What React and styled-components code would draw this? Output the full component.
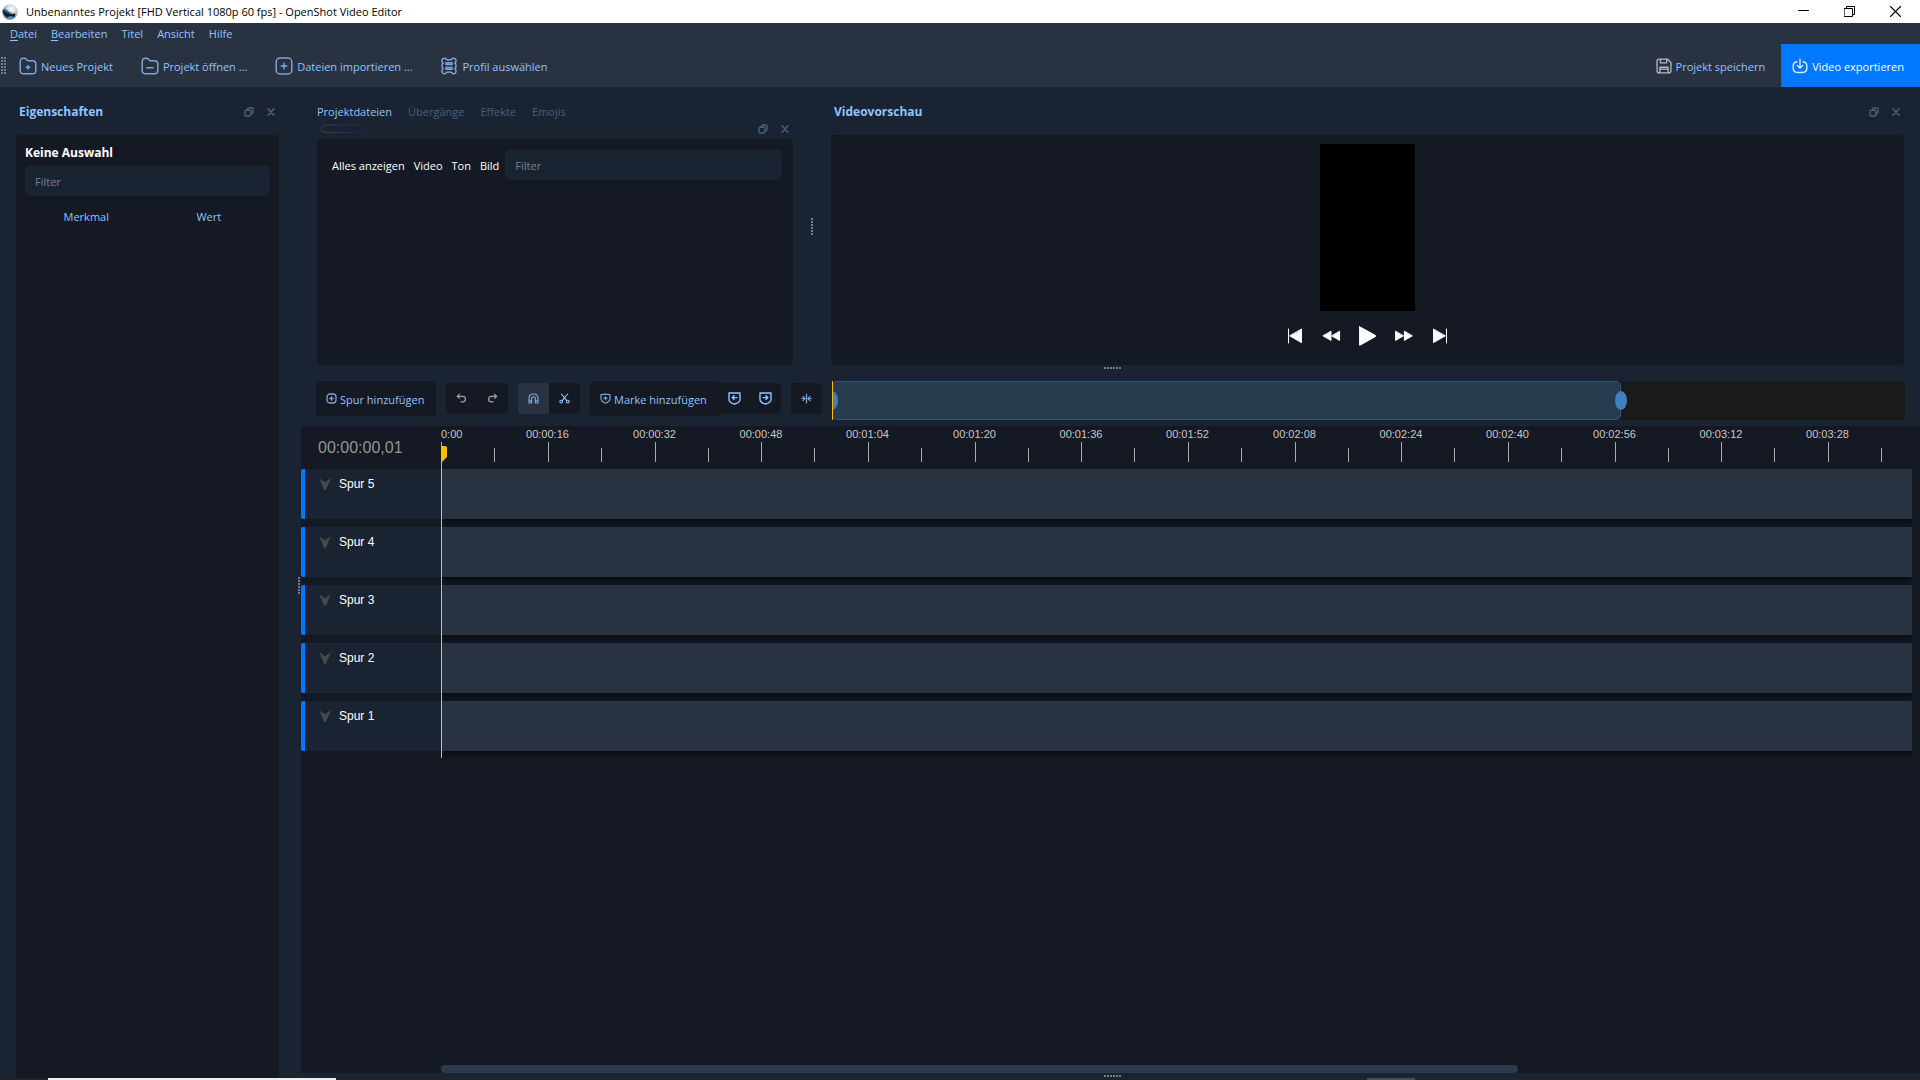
import React from "react";
import styled, { createGlobalStyle } from "styled-components";

const color = {
  base: "#192332",
  panel: "#141923",
  raised: "#283241",
  text: "#91c3ff",
  muted: "#456080",
  icon: "#7ba5dc",
  accent: "#0078ff",
  playhead: "#fabe0a",
};

const GlobalStyle = createGlobalStyle`
  * { box-sizing: border-box; }
  body {
    margin: 0;
    background: ${color.base};
    color: ${color.text};
    font: 11px/16px "Open Sans", "Noto Sans", sans-serif;
  }
  button, input { font: inherit; color: inherit; }
`;

/* ---------- shared parts ---------- */

const PlainButton = styled.button`
  display: flex;
  align-items: center;
  justify-content: center;
  border: 0;
  padding: 0;
  background: none;
  white-space: nowrap;
`;

const Panel = styled.div`
  display: flex;
  flex-direction: column;
  flex: 1;
  background: ${color.panel};
  border-radius: 4px;
`;

const FilterInput = styled.input`
  flex: ${(p) => (p.$grow ? 1 : "none")};
  min-width: 0;
  height: 30px;
  padding: 0 10px;
  border: 0;
  border-radius: 4px;
  background: ${color.base};
  color: #fff;
  outline: none;
  &::placeholder { color: #7c8188; opacity: 1; }
`;

const Svg = styled.svg`
  display: block;
  flex: none;
  fill: none;
  stroke: ${(p) => p.$stroke || color.icon};
  stroke-width: ${(p) => p.$weight || 1.5};
  stroke-linecap: round;
  stroke-linejoin: round;
`;

function Icon({ size = 18, box = size, stroke, weight, children }) {
  return (
    <Svg width={size} height={size} viewBox={`0 0 ${box} ${box}`} $stroke={stroke} $weight={weight} aria-hidden="true">
      {children}
    </Svg>
  );
}

function Grip({ cols, rows }) {
  const dots = [];
  for (let c = 0; c < cols; c++) for (let r = 0; r < rows; r++) dots.push([c * 3, r * 3]);
  return (
    <svg width={cols * 3 - 1} height={rows * 3 - 1} display="block" aria-hidden="true">
      {dots.map(([x, y]) => (
        <rect key={`${x}-${y}`} x={x} y={y} width="2" height="2" fill="#767d87" />
      ))}
    </svg>
  );
}

/* ---------- window chrome ---------- */

const Shell = styled.div`
  display: flex;
  flex-direction: column;
  min-height: 100vh;
`;

const TitleBar = styled.header`
  display: flex;
  align-items: center;
  height: 23px;
  padding: 0 2px;
  background: #fff;
  color: #000;
`;

const WindowTitle = styled.h1`
  flex: 1;
  margin: 0 0 0 8px;
  font-size: 11px;
  font-weight: 400;
`;

const WindowButton = styled(PlainButton)`
  width: 46px;
  height: 20px;
`;

const MenuBar = styled.nav`
  display: flex;
  height: 21px;
  padding: 0 3px;
  background: ${color.raised};
`;

const MenuButton = styled(PlainButton)`
  padding: 0 7px;
  u { text-underline-offset: 2px; }
`;

const ToolBar = styled.div`
  display: flex;
  align-items: center;
  gap: 13px;
  height: 43px;
  padding-left: 1px;
  background: ${color.raised};
`;

const ToolGroup = styled.div`
  display: flex;
  flex: 1;
  gap: 28px;
`;

const ToolButton = styled(PlainButton)`
  gap: 4px;
  span { padding-top: 3px; }
`;

const ExportButton = styled(ToolButton)`
  align-self: stretch;
  padding: 0 16px 0 11px;
  margin-left: 3px;
  background: ${color.accent};
  color: #fff;
`;

const TaskBar = styled.footer`
  display: flex;
  justify-content: space-between;
  height: 2px;
  padding: 0 505px 0 48px;
  background: #222326;
`;

const TaskItem = styled.div`
  width: ${(p) => p.$width};
  background: ${(p) => p.$fill};
`;

/* ---------- docks ---------- */

const Workspace = styled.main`
  display: flex;
  flex: 1;
`;

const PropertiesDock = styled.section`
  display: flex;
  flex-direction: column;
  width: 279px;
  padding-left: 16px;
`;

const DockHeader = styled.div`
  display: flex;
  align-items: center;
  height: 48px;
  padding: 2px 3px 0 3px;
`;

const DockTitle = styled.h2`
  flex: 1;
  margin: 0;
  font-size: 12px;
  font-weight: 700;
`;

const DockButtons = styled.div`
  display: flex;
  gap: 12px;
`;

const SelectionTitle = styled.h3`
  margin: 0 0 5px;
  color: #fff;
  font-size: 12px;
  font-weight: 700;
`;

const PropertiesPanel = styled(Panel)`
  padding: 10px 9px;
  border-radius: 4px 4px 0 0;
`;

const PropertyTable = styled.table`
  width: 100%;
  margin-top: 13px;
  border-collapse: collapse;
  table-layout: fixed;
  th { padding: 0; font-weight: 400; }
`;

const SideSplitter = styled.div`
  display: flex;
  align-items: center;
  justify-content: flex-end;
  width: 22px;
  padding: 6px 1px 0 0;
`;

const DockSplitter = styled.div`
  display: flex;
  align-items: center;
  justify-content: center;
  width: 38px;
`;

const HorizontalSplitter = styled.div`
  display: flex;
  justify-content: center;
  height: ${(p) => p.$height}px;
  padding: 2px 0 0 4px;
`;

const MainArea = styled.div`
  display: flex;
  flex: 1;
  flex-direction: column;
  min-width: 0;
`;

const UpperDocks = styled.div`
  display: flex;
  height: 278px;
  padding: 0 16px;
`;

const FilesDock = styled.section`
  display: flex;
  flex-direction: column;
  width: 476px;
`;

const Tabs = styled.div`
  display: flex;
  gap: 16px;
  height: 36px;
  padding-top: 14px;
`;

const Tab = styled(PlainButton)`
  color: ${(p) => (p.$active ? color.text : color.muted)};
`;

const TabSubHeader = styled.div`
  display: flex;
  align-items: center;
  justify-content: space-between;
  height: 16px;
  padding: 0 3px 4px;
`;

const FilesPanel = styled(Panel)`
  padding: 11px;
`;

const FilterRow = styled.div`
  display: flex;
  align-items: center;
`;

const FilterGroup = styled.div`
  display: flex;
  gap: 9px;
  padding: 2px 6px 0 4px;
`;

const FilterButton = styled(PlainButton)`
  color: #fff;
`;

const PreviewDock = styled.section`
  display: flex;
  flex: 1;
  flex-direction: column;
`;

const PreviewPanel = styled(Panel)`
  align-items: center;
  padding-top: 9px;
`;

const Canvas = styled.div`
  height: 167px;
  width: 95px;
  background: #000;
`;

const Transport = styled.div`
  display: flex;
  height: 50px;
`;

const TransportButton = styled(PlainButton)`
  width: 36px;
`;

/* ---------- timeline ---------- */

const TimelineTools = styled.div`
  display: flex;
  gap: 10px;
  height: 45px;
  padding: 0 15px;
`;

const Group = styled.div`
  display: flex;
  align-items: center;
  height: 35px;
`;

const squareCorners = { left: "4px 0 0 4px", right: "0 4px 4px 0", none: "0", all: "4px" };

const SquareButton = styled(PlainButton)`
  width: 31px;
  height: 31px;
  padding-bottom: 1px;
  border-radius: ${(p) => squareCorners[p.$round]};
  background: ${(p) => (p.$on ? color.raised : color.panel)};
`;

const LabelButton = styled(PlainButton)`
  gap: 3px;
  width: ${(p) => p.$width}px;
  height: 35px;
  padding: 0 10px 1px;
  border-radius: ${(p) => squareCorners[p.$round]};
  background: ${color.panel};
  justify-content: flex-start;
  span { padding-top: 3px; }
`;

const ZoomTrack = styled.div`
  position: relative;
  flex: 1;
  height: 39px;
  overflow: hidden;
  background: #1a1a1a;
`;

const ZoomSelection = styled.div`
  height: 100%;
  border: 1px solid #32567a;
  border-radius: 5px;
  background: #283c50;
`;

const ZoomKnob = styled.i`
  position: absolute;
  top: 10px;
  width: 12px;
  height: 19px;
  margin-left: -6px;
  border-radius: 50%;
  background: #427fbe;
`;

const ZoomPlayhead = styled.i`
  position: absolute;
  inset: 0 auto 0 0;
  width: 1px;
  background: ${color.playhead};
`;

const Timeline = styled.section`
  display: flex;
  flex: 1;
  flex-direction: column;
  justify-content: space-between;
  background: ${color.panel};
  font-family: "Liberation Sans", Arial, sans-serif;
`;

const TimelineContent = styled.div`
  position: relative;
  padding-bottom: 7px;
`;

const TimelineHeader = styled.div`
  display: flex;
  height: 43px;
  overflow: hidden;
`;

const Timecode = styled.div`
  flex: none;
  width: 140px;
  padding: 10px 0 0 17px;
  color: #959595;
  font-size: 16px;
  line-height: 24px;
`;

const Ruler = styled.div`
  display: flex;
  flex: 1;
  min-width: 0;
  overflow: hidden;
  color: #c8c8c8;
`;

const RulerCell = styled.div`
  display: flex;
  flex: none;
  flex-direction: column;
  align-items: ${(p) => (p.$first ? "flex-start" : "center")};
`;

const RulerLabel = styled.span`
  padding-right: 2px;
`;

const TickRow = styled.div`
  display: flex;
  align-items: flex-end;
  justify-content: space-between;
  width: 100%;
`;

const Tick = styled.i`
  width: 1px;
  height: ${(p) => p.$height}px;
  background: #aaa;
`;

const TrackList = styled.div`
  display: flex;
  flex-direction: column;
  gap: 8px;
`;

const Track = styled.div`
  display: flex;
  height: 50px;
  padding-right: 8px;
`;

const TrackHead = styled.div`
  display: flex;
  align-items: flex-start;
  gap: 7px;
  width: 140px;
  padding: 7px 0 0 13px;
  border-left: 4px solid ${color.accent};
  border-radius: 2px 0 0 2px;
  background: ${color.base};
  color: #fff;
  font-size: 12px;
`;

const TrackLane = styled.div`
  flex: 1;
  background: ${color.raised};
  box-shadow: 0 2px 8px 1px rgba(0, 0, 0, 0.65);
  clip-path: inset(0 0 -8px 0);
`;

const Playhead = styled.div`
  position: absolute;
  top: 20px;
  bottom: 0;
  left: 140px;
  width: 1px;
  background: ${color.playhead};
  svg { display: block; }
`;

const ScrollArea = styled.div`
  padding-left: 140px;
`;

const ScrollThumb = styled.div`
  height: 8px;
  border-radius: 4px;
  background: #2b3b4e;
`;

/* ---------- icons ---------- */

const FOLDER = "M1.2 5.2Q1.2 1.2 4.6 1.2H5.4Q6.6 1.2 7.4 2.2L8.2 3.2Q8.8 3.8 9.8 3.8H13.4Q16.8 3.8 16.8 7.2V13.2Q16.8 16.8 13.2 16.8H4.8Q1.2 16.8 1.2 13.2Z";
const SHIELD10 = "M1 1.6Q5.5 .6 10 1.6V5.6Q10 8.6 5.5 10.2Q1 8.6 1 5.6Z";
const SHIELD12 = "M1 1H12V7.4Q12 10.4 6.5 12Q1 10.4 1 7.4Z";

const toolbarItems = [
  { label: "Neues Projekt", art: <path d={`${FOLDER}M9 8.4V12M7.2 10.2H10.8`} /> },
  { label: "Projekt öffnen …", art: <path d={`${FOLDER}M5.8 10.8H12.2`} /> },
  { label: "Dateien importieren …", art: <><rect x="1.2" y="1" width="15.6" height="16" rx="4" /><path d="M9 6.2V11.8M6.2 9H11.8" /></> },
  {
    label: "Profil auswählen",
    art: (
      <path d="M5 1.2Q6 3 9 3Q12 3 13 1.2Q16 1 16 4Q16 5.6 14.8 6.2Q16 7 16 9Q16 11 14.8 11.8Q16 12.4 16 14Q16 17 13 16.8Q12 15 9 15Q6 15 5 16.8Q2 17 2 14Q2 12.4 3.2 11.8Q2 11 2 9Q2 7 3.2 6.2Q2 5.6 2 4Q2 1 5 1.2ZM6 5.8H12V7.6H6ZM6 10.4H12V12.2H6Z" />
    ),
  },
];

function DockControls() {
  return (
    <DockButtons>
      <PlainButton aria-label="Andocken">
        <Icon size={10} stroke="#49627f" weight="1.4">
          <rect x="1" y="3.2" width="5.8" height="5.8" rx="1" />
          <path d="M3.6 3V2Q3.6 1 4.6 1H8Q9 1 9 2V5.4Q9 6.6 7.2 6.6" />
        </Icon>
      </PlainButton>
      <PlainButton aria-label="Schließen">
        <Icon size={10} stroke="#49627f" weight="1.5">
          <path d="M2 1.8L8 8.2M8 1.8L2 8.2" />
        </Icon>
      </PlainButton>
    </DockButtons>
  );
}

function Logo() {
  return (
    <svg width="16" height="16" viewBox="0 0 16 16" aria-hidden="true">
      <defs>
        <radialGradient id="orb" cx=".6" cy=".3" r=".75">
          <stop offset="0" stopColor="#fff" />
          <stop offset=".55" stopColor="#b9c4cc" />
          <stop offset="1" stopColor="#5d6a74" />
        </radialGradient>
      </defs>
      <circle cx="8" cy="8" r="7.7" fill="url(#orb)" />
      <path d="M.5 6Q3 6.4 5.5 8.4Q9 10.6 13.4 9.2L13 12.5Q9 15.4 5 13.2Q.8 11 .5 6Z" fill="#101c2b" />
      <path d="M.8 5.4Q3.6 3.4 6.6 7.6L9.6 8.8Q6.4 9.8 3.8 8Z" fill="#2d6ea6" />
      <path d="M5 13.4Q8.6 15.8 12.6 12.8Q10 13 8 12Z" fill="#4f93c9" />
    </svg>
  );
}

/* ---------- data ---------- */

const menus = ["Datei", "Bearbeiten", "Titel", "Ansicht", "Hilfe"];
const tabs = ["Projektdateien", "Übergänge", "Effekte", "Emojis"];
const fileFilters = ["Alles anzeigen", "Video", "Ton", "Bild"];
const tracks = ["Spur 5", "Spur 4", "Spur 3", "Spur 2", "Spur 1"];
const visibleShare = { zoom: 0.7355, scroll: 0.728 };

const transport = [
  { label: "Zum Anfang", d: "M2.5 3V17M15.5 3.4V16.6L4 10Z" },
  { label: "Zurückspulen", d: "M9 5.6V14.4L1.2 10ZM17.6 5.6V14.4L10 10Z" },
  { label: "Wiedergabe", d: "M1.6 .8V19.2Q2 19.4 17.6 10.4V9.6Q2 .6 1.6 .8Z" },
  { label: "Vorspulen", d: "M1.6 5.6V14.4L9.2 10ZM10.4 5.6V14.4L18 10Z" },
  { label: "Zum Ende", d: "M16.5 3V17M3.5 3.4V16.6L15 10Z" },
];

const SECONDS_PER_MARK = 16;
const MARK_WIDTH = 320 / 3;

function formatMark(index) {
  if (index === 0) return "0:00";
  const total = index * SECONDS_PER_MARK;
  const two = (n) => String(n).padStart(2, "0");
  return `00:${two(Math.floor(total / 60))}:${two(total % 60)}`;
}

/* Each cell ends on the minor tick halfway to the next mark. */
const cellEnd = (index) => (index < 0 ? 0 : Math.round((index + 0.5) * MARK_WIDTH) + 1);

function TimeRuler() {
  return (
    <Ruler>
      {Array.from({ length: 14 }, (_, i) => (
        <RulerCell key={i} $first={i === 0} style={{ width: cellEnd(i) - cellEnd(i - 1) }}>
          <RulerLabel>{formatMark(i)}</RulerLabel>
          <TickRow>
            {i > 0 && <span />}
            <Tick $height={20} />
            <Tick $height={14} />
          </TickRow>
        </RulerCell>
      ))}
    </Ruler>
  );
}

const percent = (share) => `${share * 100}%`;

export default function App() {
  return (
    <Shell>
      <GlobalStyle />
      <TitleBar>
        <Logo />
        <WindowTitle>Unbenanntes Projekt [FHD Vertical 1080p 60 fps] - OpenShot Video Editor</WindowTitle>
        <WindowButton aria-label="Minimieren">
          <Icon size={11} stroke="#000" weight="1"><path d="M.5 4.5H10.5" /></Icon>
        </WindowButton>
        <WindowButton aria-label="Wiederherstellen">
          <Icon size={11} stroke="#000" weight="1"><path d="M.5 2.5H8.5V10.5H.5ZM2.5 2.5V.5H10.5V8.5H8.5" /></Icon>
        </WindowButton>
        <WindowButton aria-label="Fenster schließen">
          <Icon size={11} stroke="#000" weight="1.1"><path d="M.5 .5L10.5 10.5M10.5 .5L.5 10.5" /></Icon>
        </WindowButton>
      </TitleBar>

      <MenuBar>
        {menus.map((name, i) => (
          <MenuButton key={name}>
            {i < 2 ? <span><u>{name[0]}</u>{name.slice(1)}</span> : name}
          </MenuButton>
        ))}
      </MenuBar>

      <ToolBar>
        <Grip cols={2} rows={6} />
        <ToolGroup>
          {toolbarItems.map((item) => (
            <ToolButton key={item.label}>
              <Icon>{item.art}</Icon>
              <span>{item.label}</span>
            </ToolButton>
          ))}
        </ToolGroup>
        <ToolButton>
          <Icon size={16} box={18} stroke="#b4b8bf" weight="1.5">
            <path d="M3.6 1.2H13L16.8 5V14.4Q16.8 16.8 14.4 16.8H3.6Q1.2 16.8 1.2 14.4V3.6Q1.2 1.2 3.6 1.2ZM5 1.4V5.4H12V1.4M4.4 16.6V10.4H13.6V16.6M5 12.6H13" />
          </Icon>
          <span>Projekt speichern</span>
        </ToolButton>
        <ExportButton>
          <Icon size={16} box={18} stroke="#d7eaff" weight="1.6">
            <path d="M9 1.5V11M6 8.4L9 11.2L12 8.4M5.4 4.2Q1.2 4.6 1.2 10.2Q1.2 16.4 6 16.4H12Q16.8 16.4 16.8 10.2Q16.8 4.6 12.6 4.2" />
          </Icon>
          <span>Video exportieren</span>
        </ExportButton>
      </ToolBar>

      <Workspace>
        <PropertiesDock>
          <DockHeader>
            <DockTitle>Eigenschaften</DockTitle>
            <DockControls />
          </DockHeader>
          <PropertiesPanel>
            <SelectionTitle>Keine Auswahl</SelectionTitle>
            <FilterInput placeholder="Filter" aria-label="Eigenschaften filtern" />
            <PropertyTable>
              <thead>
                <tr>
                  <th scope="col">Merkmal</th>
                  <th scope="col">Wert</th>
                </tr>
              </thead>
            </PropertyTable>
          </PropertiesPanel>
        </PropertiesDock>
        <SideSplitter>
          <Grip cols={1} rows={6} />
        </SideSplitter>

        <MainArea>
          <UpperDocks>
            <FilesDock>
              <Tabs>
                {tabs.map((name, i) => (
                  <Tab key={name} $active={i === 0}>{name}</Tab>
                ))}
              </Tabs>
              <TabSubHeader>
                <svg width="56" height="10" aria-hidden="true">
                  <defs>
                    <linearGradient id="fade" x1="0" x2="1">
                      <stop offset="0" stopColor="#304258" />
                      <stop offset="1" stopColor="#192332" />
                    </linearGradient>
                  </defs>
                  <path d="M56 1H5Q1.5 1 1.5 4.5Q1.5 8.5 5 8.5H56" fill="none" stroke="url(#fade)" />
                </svg>
                <DockControls />
              </TabSubHeader>
              <FilesPanel>
                <FilterRow>
                  <FilterGroup>
                    {fileFilters.map((name) => <FilterButton key={name}>{name}</FilterButton>)}
                  </FilterGroup>
                  <FilterInput $grow placeholder="Filter" aria-label="Dateien filtern" />
                </FilterRow>
              </FilesPanel>
            </FilesDock>
            <DockSplitter>
              <Grip cols={1} rows={6} />
            </DockSplitter>
            <PreviewDock>
              <DockHeader>
                <DockTitle>Videovorschau</DockTitle>
                <DockControls />
              </DockHeader>
              <PreviewPanel>
                <Canvas />
                <Transport>
                  {transport.map((item) => (
                    <TransportButton key={item.label} aria-label={item.label}>
                      <Icon size={20} stroke="#fff" weight="1"><path d={item.d} fill="#fff" /></Icon>
                    </TransportButton>
                  ))}
                </Transport>
              </PreviewPanel>
            </PreviewDock>
          </UpperDocks>
          <HorizontalSplitter $height={16}>
            <Grip cols={6} rows={1} />
          </HorizontalSplitter>

          <TimelineTools>
            <Group>
              <LabelButton $width={120} $round="all">
                <Icon size={11} weight="1.3">
                  <rect x="1" y="1" width="9" height="9" rx="3" />
                  <path d="M5.5 3.8V7.2M3.8 5.5H7.2" />
                </Icon>
                <span>Spur hinzufügen</span>
              </LabelButton>
            </Group>
            <Group>
              <SquareButton $round="left" aria-label="Rückgängig">
                <Icon size={11} stroke="#a0a3a8" weight="1.2"><path d="M3.4 1.4L1.2 3.4L3.4 5.4M1.4 3.4H6.6Q9.4 3.4 9.4 6.2Q9.4 8.8 6.6 8.8H5" /></Icon>
              </SquareButton>
              <SquareButton $round="right" aria-label="Wiederholen">
                <Icon size={11} stroke="#a0a3a8" weight="1.2"><path d="M7.6 1.4L9.8 3.4L7.6 5.4M9.6 3.4H4.4Q1.6 3.4 1.6 6.2Q1.6 8.8 4.4 8.8H6" /></Icon>
              </SquareButton>
            </Group>
            <Group>
              <SquareButton $round="left" $on aria-label="Einrasten">
                <Icon size={11} weight="1.2"><path d="M1 10V5.4Q1 1 5.5 1Q10 1 10 5.4V10H7.4V5.6Q7.4 3.8 5.5 3.8Q3.6 3.8 3.6 5.6V10ZM1.2 7.8H3.4M7.6 7.8H9.8" /></Icon>
              </SquareButton>
              <SquareButton $round="right" aria-label="Schneiden">
                <Icon size={11} stroke={color.text} weight="1.1">
                  <path d="M2.4 1L7.6 7.4M8.6 1L3.4 7.4" />
                  <circle cx="2.2" cy="8.6" r="1.4" />
                  <circle cx="8.8" cy="8.6" r="1.4" />
                </Icon>
              </SquareButton>
            </Group>
            <Group>
              <LabelButton $width={129} $round="left">
                <Icon size={11} weight="1.2"><path d={`${SHIELD10}M5.5 3.6V6.8M3.9 5.2H7.1`} /></Icon>
                <span>Marke hinzufügen</span>
              </LabelButton>
              <SquareButton $round="none" aria-label="Vorherige Marke">
                <Icon size={13} stroke={color.text} weight="1.4"><path d={`${SHIELD12}M9 5.6H4.2M6 3.8L4.2 5.6L6 7.4`} /></Icon>
              </SquareButton>
              <SquareButton $round="right" aria-label="Nächste Marke">
                <Icon size={13} stroke={color.text} weight="1.4"><path d={`${SHIELD12}M4 5.6H8.8M7 3.8L8.8 5.6L7 7.4`} /></Icon>
              </SquareButton>
            </Group>
            <Group>
              <SquareButton $round="all" aria-label="Zeitleiste zentrieren">
                <Icon size={11} weight="1.2"><path d="M5.5 1V10M.6 5.5H3.6M2 3.4L4 5.5L2 7.6M10.4 5.5H7.4M9 3.4L7 5.5L9 7.6" /></Icon>
              </SquareButton>
            </Group>
            <ZoomTrack>
              <ZoomSelection style={{ width: percent(visibleShare.zoom) }} />
              <ZoomKnob style={{ left: 0 }} />
              <ZoomKnob style={{ left: percent(visibleShare.zoom) }} />
              <ZoomPlayhead />
            </ZoomTrack>
          </TimelineTools>

          <Timeline>
            <TimelineContent>
              <TimelineHeader>
                <Timecode>00:00:00,01</Timecode>
                <TimeRuler />
              </TimelineHeader>
              <TrackList>
                {tracks.map((name) => (
                  <Track key={name}>
                    <TrackHead>
                      <svg width="14" height="16" viewBox="0 0 14 16" aria-hidden="true">
                        <path d="M1 2L7 6.2L13 2L7.8 14H6.2Z" fill="#484848" />
                      </svg>
                      {name}
                    </TrackHead>
                    <TrackLane />
                  </Track>
                ))}
              </TrackList>
              <Playhead>
                <svg width="6" height="16" aria-hidden="true">
                  <path d="M0 0H4Q6 0 6 2V11L1 16H0Z" fill={color.playhead} />
                </svg>
              </Playhead>
            </TimelineContent>
            <ScrollArea>
              <ScrollThumb style={{ width: percent(visibleShare.scroll) }} />
            </ScrollArea>
          </Timeline>
          <HorizontalSplitter $height={5}>
            <Grip cols={6} rows={1} />
          </HorizontalSplitter>
        </MainArea>
      </Workspace>

      <TaskBar>
        <TaskItem $width="288px" $fill="#eee" />
        <TaskItem $width="48px" $fill="#4b4d51" />
      </TaskBar>
    </Shell>
  );
}
